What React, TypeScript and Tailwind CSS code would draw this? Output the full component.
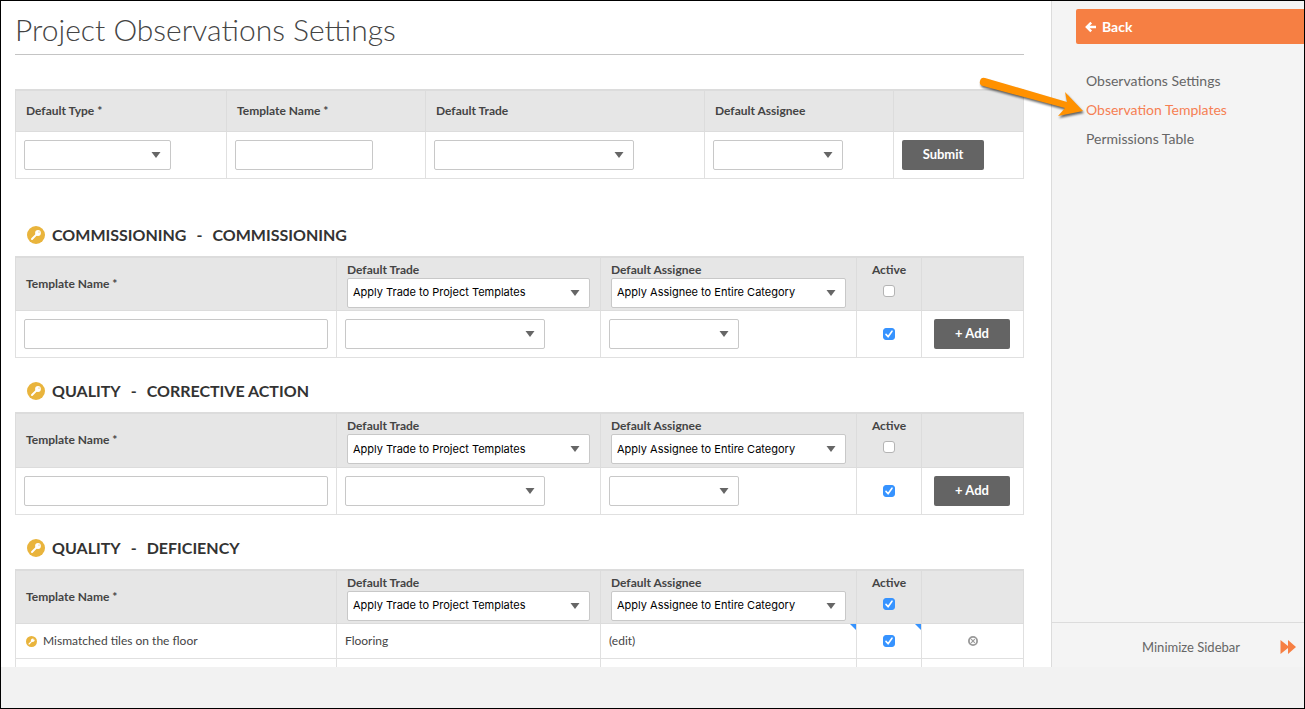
import { useState } from 'react';
import type { ReactNode } from 'react';

interface Template {
  name: string;
  trade: string;
}

interface Category {
  type: string;
  name: string;
  active: boolean;
  templates: Template[];
}

const CATEGORIES: Category[] = [
  { type: 'COMMISSIONING', name: 'COMMISSIONING', active: false, templates: [] },
  { type: 'QUALITY', name: 'CORRECTIVE ACTION', active: false, templates: [] },
  {
    type: 'QUALITY',
    name: 'DEFICIENCY',
    active: true,
    templates: [{ name: 'Mismatched tiles on the floor', trade: 'Flooring' }],
  },
];

const NAV_LINKS = ['Observations Settings', 'Observation Templates', 'Permissions Table'];

const TH = 'border border-[#dcdcdc] px-[10px] text-left font-bold';
const TD = 'border border-[#e0e0e0] px-2';

function KeyBadge({ className }: { className: string }) {
  return (
    <svg viewBox="0 0 18 18" className={className} aria-hidden="true">
      <circle cx="9" cy="9" r="9" fill="#e9b43c" />
      <path d="M9.6 8.4 5 13" stroke="#fff" strokeWidth="2" strokeLinecap="round" />
      <circle cx="11" cy="7" r="2.9" fill="#fff" />
      <circle cx="12" cy="6" r="0.6" fill="#e9b43c" />
    </svg>
  );
}

function SelectBox({ label, className, option = '' }: { label: string; className: string; option?: string }) {
  return (
    <div className={`relative ${className}`}>
      <select
        aria-label={label}
        className="block h-[30px] w-full appearance-none rounded-xs border border-[#c8c8c8] bg-white pl-[5px] pr-6 font-['Inter',sans-serif] text-[11px] font-normal text-black"
      >
        <option>{option}</option>
      </select>
      <svg viewBox="0 0 10 6" className="pointer-events-none absolute right-[10px] top-3 h-[6px] w-[10px]" aria-hidden="true">
        <path d="M0.5 0h9L5 6z" fill="#666" />
      </svg>
    </div>
  );
}

function TextBox({ label, className }: { label: string; className: string }) {
  return (
    <input
      type="text"
      aria-label={label}
      className={`block h-[30px] rounded-xs border border-[#c8c8c8] bg-white px-2 ${className}`}
    />
  );
}

function CheckBox({ label, initial }: { label: string; initial: boolean }) {
  const [checked, setChecked] = useState(initial);
  return (
    <span className="relative mx-auto block h-3 w-3">
      <input
        type="checkbox"
        aria-label={label}
        checked={checked}
        onChange={(e) => setChecked(e.target.checked)}
        className="block h-3 w-3 appearance-none rounded-[3px] border border-[#b4b4b4] bg-white checked:border-[#3693ff] checked:bg-[#3693ff]"
      />
      {checked && (
        <svg viewBox="0 0 12 12" className="pointer-events-none absolute inset-0 h-3 w-3" aria-hidden="true">
          <path d="M3 6.4 5.1 8.8 9 3.2" fill="none" stroke="#fff" strokeWidth="1.6" strokeLinecap="round" strokeLinejoin="round" />
        </svg>
      )}
    </span>
  );
}

function DarkButton({ className, children }: { className: string; children: ReactNode }) {
  return (
    <button type="button" className={`block h-[30px] rounded-xs bg-[#646464] text-[13px] font-bold text-white ${className}`}>
      {children}
    </button>
  );
}

// Blue triangle marking an inline-editable cell
function EditCorner() {
  return (
    <svg viewBox="0 0 6 6" className="absolute right-0 top-0 h-[6px] w-[6px]" aria-hidden="true">
      <path d="M0 0h6v6z" fill="#3693ff" />
    </svg>
  );
}

function NewTemplateTable() {
  return (
    <table className="w-full table-fixed text-xs">
      <colgroup>
        <col className="w-[211px]" />
        <col className="w-[199px]" />
        <col />
        <col className="w-[189px]" />
        <col className="w-[130px]" />
      </colgroup>
      <thead className="bg-[#e6e6e6]">
        <tr className="h-[41px] border-t-2 border-[#dcdcdc]">
          <th className={TH}>Default Type *</th>
          <th className={TH}>Template Name *</th>
          <th className={TH}>Default Trade</th>
          <th className={TH}>Default Assignee</th>
          <th className={TH} />
        </tr>
      </thead>
      <tbody>
        <tr className="h-[47px]">
          <td className={TD}><SelectBox label="Default Type" className="w-[147px]" /></td>
          <td className={TD}><TextBox label="Template Name" className="w-[138px]" /></td>
          <td className={TD}><SelectBox label="Default Trade" className="w-[200px]" /></td>
          <td className={TD}><SelectBox label="Default Assignee" className="w-[130px]" /></td>
          <td className={TD}><DarkButton className="w-[82px]">Submit</DarkButton></td>
        </tr>
      </tbody>
    </table>
  );
}

function CategorySection({ category }: { category: Category }) {
  return (
    <section className="mb-[21px]">
      <h2 className="mb-[9px] flex h-6 items-center pl-3 text-base font-bold text-[#333]">
        <KeyBadge className="mr-[7px] h-[18px] w-[18px]" />
        <span>{category.type}</span>
        <span className="mx-[10px]">-</span>
        <span>{category.name}</span>
      </h2>
      <table className="w-full table-fixed text-xs">
        <colgroup>
          <col className="w-[321px]" />
          <col className="w-[264px]" />
          <col />
          <col className="w-[65px]" />
          <col className="w-[102px]" />
        </colgroup>
        <thead className="bg-[#e6e6e6]">
          <tr className="h-[54px] border-t-2 border-[#dcdcdc]">
            <th className={TH}>Template Name *</th>
            <th className={`${TH} align-top pt-1`}>
              <div className="h-4 leading-4">Default Trade</div>
              <SelectBox label="Apply trade" className="w-[243px]" option="Apply Trade to Project Templates" />
            </th>
            <th className={`${TH} align-top pt-1`}>
              <div className="h-4 leading-4">Default Assignee</div>
              <SelectBox label="Apply assignee" className="w-[235px]" option="Apply Assignee to Entire Category" />
            </th>
            <th className="border border-[#dcdcdc] pt-1 text-center align-top font-bold">
              <div className="mb-[7px] h-4 leading-4">Active</div>
              <CheckBox label="All active" initial={category.active} />
            </th>
            <th className={TH} />
          </tr>
        </thead>
        <tbody>
          {category.templates.map((template) => (
            <tr key={template.name} className="h-[35px]">
              <td className={TD}>
                <div className="flex items-center gap-[6px] pl-[2px]">
                  <KeyBadge className="h-[11px] w-[11px]" />
                  {template.name}
                </div>
              </td>
              <td className={TD}>{template.trade}</td>
              <td className={`${TD} relative`}>
                <button type="button">(edit)</button>
                <EditCorner />
              </td>
              <td className={`${TD} relative`}>
                <CheckBox label={`${template.name} active`} initial />
                <EditCorner />
              </td>
              <td className={TD}>
                <button type="button" aria-label="Delete template" className="mx-auto block">
                  <svg viewBox="0 0 10 10" className="h-[10px] w-[10px]">
                    <circle cx="5" cy="5" r="4.1" fill="#fff" stroke="#999" strokeWidth="1.8" />
                    <path d="M3.2 3.2l3.6 3.6M6.8 3.2 3.2 6.8" stroke="#999" strokeWidth="1.2" />
                  </svg>
                </button>
              </td>
            </tr>
          ))}
          {category.templates.length === 0 ? (
            <tr className="h-[47px]">
              <td className={TD}><TextBox label="Template Name" className="w-full" /></td>
              <td className={TD}><SelectBox label="Default Trade" className="w-[200px]" /></td>
              <td className={TD}><SelectBox label="Default Assignee" className="w-[130px]" /></td>
              <td className={TD}><CheckBox label="Active" initial /></td>
              <td className="border border-[#e0e0e0] px-3"><DarkButton className="w-[76px]">+ Add</DarkButton></td>
            </tr>
          ) : (
            <tr className="h-[47px]">
              <td className={TD} />
              <td className={TD} />
              <td className={TD} />
              <td className={TD} />
              <td className={TD} />
            </tr>
          )}
        </tbody>
      </table>
    </section>
  );
}

// Callout arrow pointing at the current page's link
function PointerArrow() {
  return (
    <svg
      viewBox="978 74 112 50"
      className="pointer-events-none absolute -right-1 -top-9 h-[50px] w-[112px] drop-shadow-[1px_2px_1px_rgba(0,0,0,0.6)]"
      aria-hidden="true"
    >
      <path d="M985 78 1067 102 1065 92 1083 111 1058 116 1065 108 983 86A4 4 0 0 1 985 78z" fill="#ff9100" />
    </svg>
  );
}

function Sidebar() {
  return (
    <aside className="flex w-[253px] shrink-0 flex-col border-l border-[#dcdcdc] bg-[#f4f4f4] text-sm text-[#666]">
      <a href="#back" className="ml-6 mt-2 flex h-[35px] items-center gap-[5px] rounded-l-xs bg-[#f67f43] pl-[9px] font-bold text-white">
        <svg viewBox="0 0 12 12" className="h-3 w-3" aria-hidden="true">
          <path d="M6.2 1.6 1.8 6l4.4 4.4M2.2 6H11" fill="none" stroke="#fff" strokeWidth="2.4" />
        </svg>
        Back
      </a>
      <nav className="mt-[22px]">
        <ul>
          {NAV_LINKS.map((link) => {
            const current = link === 'Observation Templates';
            return (
              <li key={link} className="flex h-[29px] items-center pl-[34px]">
                {current && (
                  <span className="relative">
                    <PointerArrow />
                  </span>
                )}
                <a href="#nav" className={current ? 'text-[#f67f53]' : ''}>{link}</a>
              </li>
            );
          })}
        </ul>
      </nav>
      <button type="button" className="mt-auto flex h-[45px] items-center justify-end gap-10 border-t border-[#dcdcdc] pr-2 pt-1 text-[13px]">
        Minimize Sidebar
        <svg viewBox="0 0 16 14" className="h-[14px] w-4" aria-hidden="true">
          <path d="M0.5 0 8 6v-6l8 7-8 7V8L0.5 14z" fill="#f67f43" />
        </svg>
      </button>
    </aside>
  );
}

export default function App() {
  return (
    <div className="flex h-screen flex-col border border-black bg-[#f2f2f2] font-['Lato',sans-serif] text-[#444]">
      <div className="flex min-h-0 flex-1">
        <main className="min-w-0 flex-1 overflow-hidden bg-white pl-[14px] pr-[27px]">
          <h1 className="mb-[34px] flex h-[54px] items-center border-b border-[#c4c4c4] pt-1 text-[30px] font-light">
            Project Observations Settings
          </h1>
          <NewTemplateTable />
          <div className="pt-11">
            {CATEGORIES.map((category) => (
              <CategorySection key={category.name} category={category} />
            ))}
          </div>
        </main>
        <Sidebar />
      </div>
      <footer className="h-[41px] shrink-0" />
    </div>
  );
}
